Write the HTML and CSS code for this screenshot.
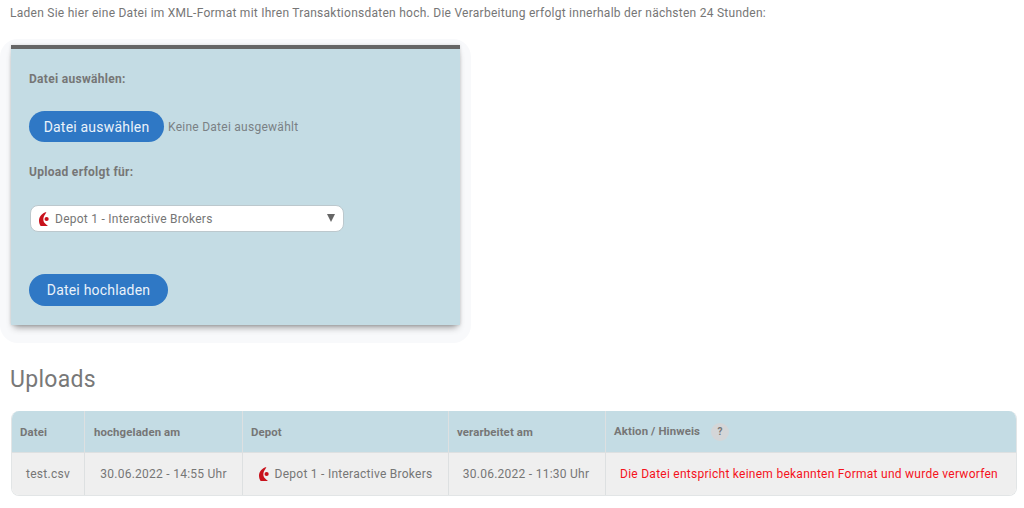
FILE: index.html
```html
<!DOCTYPE html>
<html lang="de">
<head>
<meta charset="utf-8">
<title>Upload</title>
<link rel="stylesheet" href="styles.css">
</head>
<body>
<p class="intro">Laden Sie hier eine Datei im XML-Format mit Ihren Transaktionsdaten hoch. Die Verarbeitung erfolgt innerhalb der nächsten 24 Stunden:</p>
<div class="halo">
  <form class="card">
    <div class="label first">Datei auswählen:</div>
    <div class="file-row">
      <span class="btn btn-file">Datei auswählen</span>
      <span class="file-none">Keine Datei ausgewählt</span>
    </div>
    <div class="label second">Upload erfolgt für:</div>
    <div class="select">
      <svg class="logo" viewBox="0 0 10 14"><path d="M7.4 0 C3 1.2 0 4.6 0 8.6 C0 10.8 .6 12.8 1.6 14 L9 14 C7.4 12.4 5.8 11.6 4.9 10 C4 8.2 4.2 5.4 5.4 3.6 C6.2 2.4 7 1.2 7.4 0 Z" fill="#c8121c"/><circle cx="7.6" cy="7" r="2.1" fill="#c8121c"/></svg>
      <span class="select-text">Depot 1 - Interactive Brokers</span>
      <span class="caret"></span>
    </div>
    <span class="btn btn-upload">Datei hochladen</span>
  </form>
</div>
<h2 class="title">Uploads</h2>
<table class="table">
  <thead>
    <tr>
      <th class="c1">Datei</th>
      <th class="c2">hochgeladen am</th>
      <th class="c3">Depot</th>
      <th class="c4">verarbeitet am</th>
      <th class="c5">Aktion / Hinweis <span class="help">?</span></th>
    </tr>
  </thead>
  <tbody>
    <tr>
      <td>test.csv</td>
      <td>30.06.2022 - 14:55 Uhr</td>
      <td><svg class="logo logo-cell" viewBox="0 0 10 14"><path d="M7.4 0 C3 1.2 0 4.6 0 8.6 C0 10.8 .6 12.8 1.6 14 L9 14 C7.4 12.4 5.8 11.6 4.9 10 C4 8.2 4.2 5.4 5.4 3.6 C6.2 2.4 7 1.2 7.4 0 Z" fill="#c8121c"/><circle cx="7.6" cy="7" r="2.1" fill="#c8121c"/></svg>Depot 1 - Interactive Brokers</td>
      <td class="cell-date">30.06.2022 - 11:30 Uhr</td>
      <td class="error">Die Datei entspricht keinem bekannten Format und wurde verworfen</td>
    </tr>
  </tbody>
</table>
</body>
</html>
```
FILE: styles.css
```css
* { box-sizing: border-box; }
html, body { margin: 0; height: 508px; overflow: hidden; }
body {
  padding: 0 7px 0 10px;
  background: #fff;
  color: #767676;
  font-family: Roboto, "Liberation Sans", sans-serif;
  font-size: 12px;
}
.intro { margin: 0; padding-top: 6px; line-height: 14px; letter-spacing: .26px; width: 800px; }
.halo {
  width: 471px;
  margin: 19px 0 0 -10px;
  padding: 6px 11px 18px 11px;
  border-radius: 18px;
  background: #f8f9fb;
}
.card {
  display: block;
  height: 280px;
  padding: 0 18px;
  background: #c4dce4;
  border-top: 4px solid #666;
  box-shadow: 0 5px 7px -3px rgba(0,0,0,.42), 0 0 3px rgba(0,0,0,.14);
}
.label { font-weight: 700; line-height: 14px; color: #767676; letter-spacing: .3px; }
.label.first { padding-top: 23px; }
.label.second { margin-top: 23px; }
.file-row { display: flex; align-items: center; margin: 25px 0 0; gap: 4px; }
.btn {
  display: inline-flex;
  align-items: center;
  justify-content: center;
  background: #2f78c5;
  color: #eaf2fa;
  border-radius: 16px;
  font-size: 14px;
  letter-spacing: .2px;
}
.btn-file { width: 135px; height: 31px; }
.file-none { color: #7a8185; letter-spacing: .26px; }
.select {
  display: flex;
  align-items: center;
  width: 314px;
  height: 27px;
  margin: 26px 0 0 1px;
  padding: 0 8px;
  background: #fff;
  border: 1px solid #bcc8cd;
  border-radius: 8px;
}
.logo { width: 10px; height: 14px; flex: none; }
.select-text { margin-left: 6px; letter-spacing: .25px; flex: 1; }
.caret {
  width: 0; height: 0;
  margin-top: -2px;
  border-left: 4px solid transparent;
  border-right: 4px solid transparent;
  border-top: 8px solid #666;
}
.btn-upload { width: 139px; height: 32px; margin-top: 42px; }
.title {
  margin: 23px 0 0 0;
  font-size: 23px;
  line-height: 28px;
  font-weight: 400;
  color: #787878;
  letter-spacing: .3px;
}
.table {
  width: 1006px;
  margin: 17px 0 0 1px;
  border-collapse: separate;
  border-spacing: 0;
  table-layout: fixed;
  border-radius: 8px;
  overflow: hidden;
  border: 1px solid #e2e5e6;
  border-top: 0;
}
th, td { border-right: 1px solid #dde0e1; }
th:last-child, td:last-child { border-right: 0; }
th {
  height: 41px;
  padding: 0 8px;
  background: #c4dce4;
  text-align: left;
  font-size: 11.4px;
  font-weight: 700;
  color: #767676;
  letter-spacing: .12px;
}
td {
  height: 43px;
  padding: 0;
  background: #efefef;
  border-top: 1px solid #dde0e1;
  text-align: center;
  letter-spacing: .26px;
}
.c1 { width: 73px; }
th.c2 { width: 158px; padding-left: 9px; }
.c3 { width: 206px; }
.c4 { width: 157px; }
.help {
  display: inline-block;
  width: 18px; height: 18px;
  margin-left: 8px;
  border-radius: 50%;
  background: #d4d6d8;
  text-align: center;
  line-height: 18px;
  font-size: 10px;
  vertical-align: middle;
}
.logo-cell { vertical-align: -3px; margin-right: 6px; }
.cell-date { padding-right: 2px; }
.error { color: #f5121c; padding-right: 4px; }
```
